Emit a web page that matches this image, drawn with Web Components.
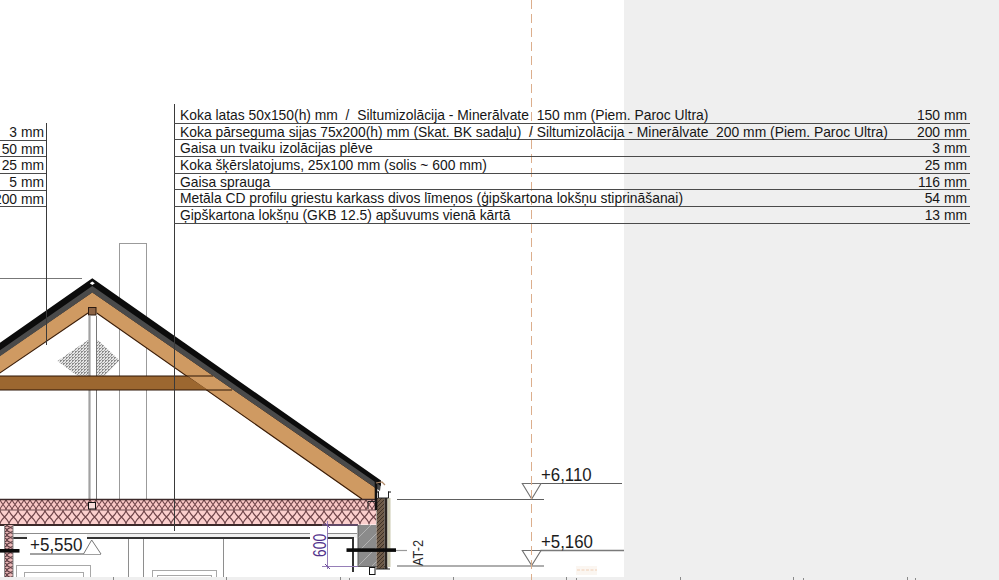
<!DOCTYPE html>
<html lang="lv">
<head>
<meta charset="utf-8">
<title>Griezums</title>
<style>
html,body{margin:0;padding:0;background:#efefef}
body{width:999px;height:580px;overflow:hidden;font-family:"Liberation Sans",Arial,sans-serif}
</style>
</head>
<body>
<cad-sheet>
  <spec-table slot="left">
    <spec-row class="bare" thick="3 mm"></spec-row>
    <spec-row class="bare" thick="50 mm"></spec-row>
    <spec-row class="bare" thick="25 mm"></spec-row>
    <spec-row class="bare" thick="5 mm"></spec-row>
    <spec-row class="bare" thick="200 mm"></spec-row>
  </spec-table>
  <spec-table slot="main">
    <spec-row thick="150 mm">Koka latas 50x150(h) mm  /  Siltumizolācija - Minerālvate  150 mm (Piem. Paroc Ultra)</spec-row>
    <spec-row thick="200 mm">Koka pārseguma sijas 75x200(h) mm (Skat. BK sadaļu)  / Siltumizolācija - Minerālvate  200 mm (Piem. Paroc Ultra)</spec-row>
    <spec-row thick="3 mm">Gaisa un tvaiku izolācijas plēve</spec-row>
    <spec-row thick="25 mm">Koka šķērslatojums, 25x100 mm (solis ~ 600 mm)</spec-row>
    <spec-row thick="116 mm">Gaisa sprauga</spec-row>
    <spec-row thick="54 mm">Metāla CD profilu griestu karkass divos līmeņos (ģipškartona lokšņu stiprināšanai)</spec-row>
    <spec-row thick="13 mm">Ģipškartona lokšņu (GKB 12.5) apšuvums vienā kārtā</spec-row>
  </spec-table>
</cad-sheet>

<template id="t-sheet">
  <style>
    :host{display:block;position:relative;width:999px;height:580px;background:#efefef;overflow:hidden;color:#222}
    .grid{position:relative;display:grid;grid-template-columns:46px 128px 796px;align-items:start;padding-top:107px}
    ::slotted([slot="left"]){margin-top:17px}
  </style>
  <cad-drawing></cad-drawing>
  <div class="grid">
    <slot name="left"></slot>
    <span></span>
    <slot name="main"></slot>
  </div>
</template>

<template id="t-table">
  <style>
    :host{display:flex;flex-direction:column;min-width:0;overflow:hidden}
  </style>
  <slot></slot>
</template>

<template id="t-row">
  <style>
    :host{display:flex;justify-content:flex-end;align-items:center;box-sizing:border-box;height:16.7px;padding-top:1px;border-bottom:1px solid #4a4a4a;font:13.86px/15px "Liberation Sans",Arial,sans-serif;color:#161616;white-space:pre}
    .name{padding-left:6px}
    .val{margin-left:auto;padding-right:3px;flex:none}
    :host(.bare) .name{display:none}
    :host(.bare) .val{padding-right:2px}
  </style>
  <span class="name"><slot></slot></span><span class="val"></span>
</template>

<template id="t-drawing">
  <style>
    :host{display:block;position:absolute;left:0;top:0;width:999px;height:580px}
    svg{display:block}
    text{font-family:"Liberation Sans",Arial,sans-serif}
  </style>
  <svg width="999" height="580" viewBox="0 0 999 580" xmlns="http://www.w3.org/2000/svg">
    <defs>
      <pattern id="insA" width="6" height="11" patternUnits="userSpaceOnUse" y="499">
        <rect width="6" height="11" fill="#f8c6c4"/>
        <path d="M0 0C0 4 6 7 6 11M6 0C6 4 0 7 0 11" fill="none" stroke="#6f454a" stroke-width="1.1"/>
      </pattern>
      <pattern id="insB" width="9" height="14" patternUnits="userSpaceOnUse" y="510">
        <rect width="9" height="14" fill="#fbcfcd"/>
        <path d="M0 0C0 5 9 9 9 14M9 0C9 5 0 9 0 14" fill="none" stroke="#6f454a" stroke-width="1.2"/>
      </pattern>
      <pattern id="insC" width="7" height="5" patternUnits="userSpaceOnUse">
        <rect width="7" height="5" fill="#eab6b6"/>
        <path d="M0 0C0 2 7 3 7 5M7 0C7 2 0 3 0 5" fill="none" stroke="#5c3c42" stroke-width="1.2"/>
      </pattern>
      <pattern id="check" width="3" height="3" patternUnits="userSpaceOnUse">
        <rect width="3" height="3" fill="#e4e4e4"/>
        <rect width="2" height="1" fill="#8c8c8c"/>
        <rect width="1" height="2" fill="#8c8c8c"/>
        <rect x="2" y="2" width="1" height="1" fill="#a0a0a0"/>
      </pattern>
      <pattern id="conc" width="14" height="14" patternUnits="userSpaceOnUse">
        <rect width="14" height="14" fill="#8b8b8b"/>
        <path d="M-2 16L16 -2" stroke="#b2b2b2" stroke-width="1"/>
      </pattern>
      <pattern id="brick" width="4" height="4" patternUnits="userSpaceOnUse">
        <rect width="4" height="4" fill="#6f5c4a"/>
        <path d="M0 4L4 0" stroke="#3e3228" stroke-width="1"/>
      </pattern>
    </defs>

    <!-- sheet -->
    <rect width="624" height="577" fill="#fff"/>

    <!-- thin reference lines behind the roof -->
    <g fill="none" shape-rendering="crispEdges">
      <path d="M119.5 499V243.5H146.5V499" stroke="#9b9b9b"/>
      <path d="M0 278.5H82" stroke="#777"/>
    </g>

    <!-- hatch behind the post -->
    <polygon points="57.5,361 88,340 98,340 119.5,360.5 105,375.5 77,375.5" fill="url(#check)"/>

    <!-- post -->
    <rect x="89" y="316" width="7" height="183" fill="#fff"/>
    <path d="M89.5 316V499" stroke="#a2a2a2" stroke-width="2.2" fill="none"/>
    <path d="M96.5 316V499" stroke="#777" stroke-width="1" fill="none"/>

    <!-- rafters -->
    <polygon points="-1,356 92.3,292 376,488 376,499.5 362,499.5 96.7,313 88,313 -1,373.5" fill="#cf9a62"/>
    <path d="M-1 373.5L88 313M96.7 313L362 499" stroke="#3b1d08" stroke-width="1.1" fill="none"/>
    <path d="M-1 356L92.3 292L376 488" stroke="#3b1d08" stroke-width="1" fill="none"/>

    <!-- collar beam -->
    <polygon points="0,376 187,376 208,390 0,390" fill="#9c6730"/>
    <path d="M0 376H213M0 390H232" stroke="#2c1505" stroke-width="1.2" fill="none"/>

    <!-- roof covering -->
    <polygon points="-1,347.5 92.3,283 381,483.5 380,491 92.3,292.5 -1,357" fill="#4a4a4a"/>
    <polygon points="-1,343.5 92.3,278.3 381,480.5 381,486 92.3,286 -1,351" fill="#0c0c0c"/>
    <path d="M92.3 281.5l2.5 1.8-2.5 1.6-2.5-1.6z" fill="#fff"/>

    <!-- ridge block -->
    <rect x="88.5" y="307.5" width="7.5" height="7.5" fill="#8d6445" stroke="#2b1a10"/>

    <!-- columns and lines -->
    <g shape-rendering="crispEdges" fill="none">
      <path d="M46 122.5V345M174.5 104V531" stroke="#3a3a3a"/>
    </g>

    <!-- ceiling insulation -->
    <rect x="0" y="499" width="376" height="11" fill="url(#insA)"/>
    <rect x="0" y="510" width="376" height="14.5" fill="url(#insB)"/>
    <path d="M0 499.5H376" stroke="#3c2a2a" stroke-width="1.4"/>
    <path d="M0 510H376" stroke="#6d4a4f" stroke-width="1"/>
    <path d="M0 525H358" stroke="#3c2a2a" stroke-width="1.8"/>
    <rect x="88.5" y="502.5" width="7" height="6.5" fill="#f7dcd9" stroke="#111"/>
    <path d="M174.5 499V531" stroke="#3a3a3a"/>

    <!-- ceiling finish -->
    <rect x="13" y="533" width="344" height="5" fill="#f1f1f1"/>
    <path d="M13 533.5H357" stroke="#8c8c8c" stroke-width="1"/>
    <path d="M13 538H353V572" stroke="#333" stroke-width="2" fill="none"/>

    <!-- partition -->
    <rect x="5" y="525" width="8" height="52" fill="url(#insC)"/>
    <path d="M4.5 525V577M13 525V577" stroke="#8a8a8a"/>
    <rect x="0" y="549" width="19.5" height="3.6" fill="#0a0a0a"/>

    <!-- lower room outlines -->
    <g fill="none" stroke="#a8a8a8" shape-rendering="crispEdges">
      <path d="M128.5 539V577M143.5 539V577M223.5 539V577" stroke="#8e8e8e"/>
      <path d="M16.5 577V565.5H90.5V577"/>
      <path d="M24.5 577V572.5H83.5V577"/>
      <path d="M152.5 577V570.5H216.5V577"/>
      <path d="M157.5 577V575.5H211.5V577"/>
    </g>

    <!-- +5,550 level -->
    <rect x="27" y="534" width="60" height="20" fill="#fff"/>
    <path d="M30 554H101" stroke="#444" stroke-width="1"/>
    <path d="M83.5 554L91.7 540L101 554" fill="#fff" stroke="#777" stroke-width="1"/>
    <text transform="translate(30 551) scale(.92 1)" font-size="18.5" fill="#1c1c1c">+5,550</text>

    <!-- wall corner -->
    <rect x="358" y="525" width="18.5" height="41.5" fill="url(#conc)"/>
    <path d="M358 525V566M352 566.5H386" stroke="#5a5a5a" fill="none"/>
    <rect x="376.5" y="498" width="8" height="71" fill="url(#brick)"/>
    <rect x="384.5" y="498" width="3" height="71" fill="#2c2622"/>
    <rect x="387.5" y="498" width="3" height="69" fill="#cccab2"/>
    <path d="M386 569H390M376 569H386" stroke="#222"/>

    <!-- eaves -->
    <path d="M376 480V510" stroke="#111" stroke-width="2.6" fill="none"/>
    <path d="M376 483l6-1 3 3" stroke="#b08a6a" stroke-width="1.2" fill="none"/>
    <path d="M378.5 491.5V498H388.5V491.5" fill="#fff" stroke="#222"/>
    <path d="M376.5 492H379M388 492H391" stroke="#111"/>
    <path d="M368 501.5H376.5M368 501.5V509" stroke="#222" fill="none"/>
    <rect x="369.5" y="567.5" width="5.5" height="7" fill="#fff" stroke="#111"/>

    <!-- dimension 600 -->
    <path d="M327.5 521V569M322 525H358M322 566.5H358" stroke="#8a70b0" stroke-width=".9" fill="none"/>
    <path d="M325 523l5 5M325 564l5 5" stroke="#6b4a9c" stroke-width="1" fill="none"/>
    <rect x="310" y="532" width="17" height="28" fill="#fff"/>
    <text transform="translate(325.5 557) rotate(-90) scale(.77 1)" font-size="18" fill="#53338c">600</text>

    <!-- section mark -->
    <rect x="346.5" y="548.3" width="49.5" height="3.6" fill="#0a0a0a"/>
    <path d="M396 550.5H407" stroke="#9a9a9a" stroke-width="1.2"/>
    <text transform="translate(423 566) rotate(-90) scale(.83 1)" font-size="15.4" fill="#2b2b2b">AT-2</text>

    <!-- right levels -->
    <g fill="none">
      <path d="M397 499.5H544" stroke="#5e5e5e" stroke-width="1"/>
      <path d="M397 566H544" stroke="#5e5e5e" stroke-width="1.2"/>
      <path d="M540.5 483.5H622" stroke="#5e5e5e" stroke-width="1"/>
      <path d="M540.5 550.5H624" stroke="#7a7a7a" stroke-width="1.6"/>
      <path d="M522.3 483.5H541L531.7 499Z" stroke="#707070" stroke-width="1.1"/>
      <path d="M522.3 550.5H541L531.7 565.5Z" stroke="#707070" stroke-width="1.1"/>
    </g>
    <text transform="translate(541 481) scale(.91 1)" font-size="18.5" fill="#1c1c1c">+6,110</text>
    <text transform="translate(541 548) scale(.91 1)" font-size="18.5" fill="#1c1c1c">+5,160</text>

    <!-- axis -->
    <path d="M531.5 0V580" stroke="#dcae8c" stroke-width="1" stroke-dasharray="9 5" fill="none"/>

    <!-- faint marks -->
    <rect x="576" y="566" width="21" height="9" fill="#fbf6f1"/>
    <path d="M577 570H597" stroke="#f0cfb6" stroke-width="1" stroke-dasharray="3 1.5"/>

    <!-- bottom ticks -->
    <path d="M113.5 577V580M226.5 577V580M340.5 577V580M453.5 577V580M566.5 577V580M680.5 577V580M793.5 577V580M907.5 577V580M349 578V580M576 578V580M803 578V580M915 578V580" stroke="#8a8a8a" shape-rendering="crispEdges"/>
  </svg>
</template>

<script>
function mount(el,id){
  const root=el.attachShadow({mode:"open"});
  root.appendChild(document.getElementById(id).content.cloneNode(true));
  return root;
}
customElements.define("cad-drawing",class extends HTMLElement{
  constructor(){super();mount(this,"t-drawing");}
});
customElements.define("cad-sheet",class extends HTMLElement{
  constructor(){super();mount(this,"t-sheet");}
});
customElements.define("spec-table",class extends HTMLElement{
  constructor(){super();mount(this,"t-table");}
});
customElements.define("spec-row",class extends HTMLElement{
  constructor(){super();this._r=mount(this,"t-row");}
  connectedCallback(){this._r.querySelector(".val").textContent=this.getAttribute("thick")||"";}
});
</script>
</body>
</html>
